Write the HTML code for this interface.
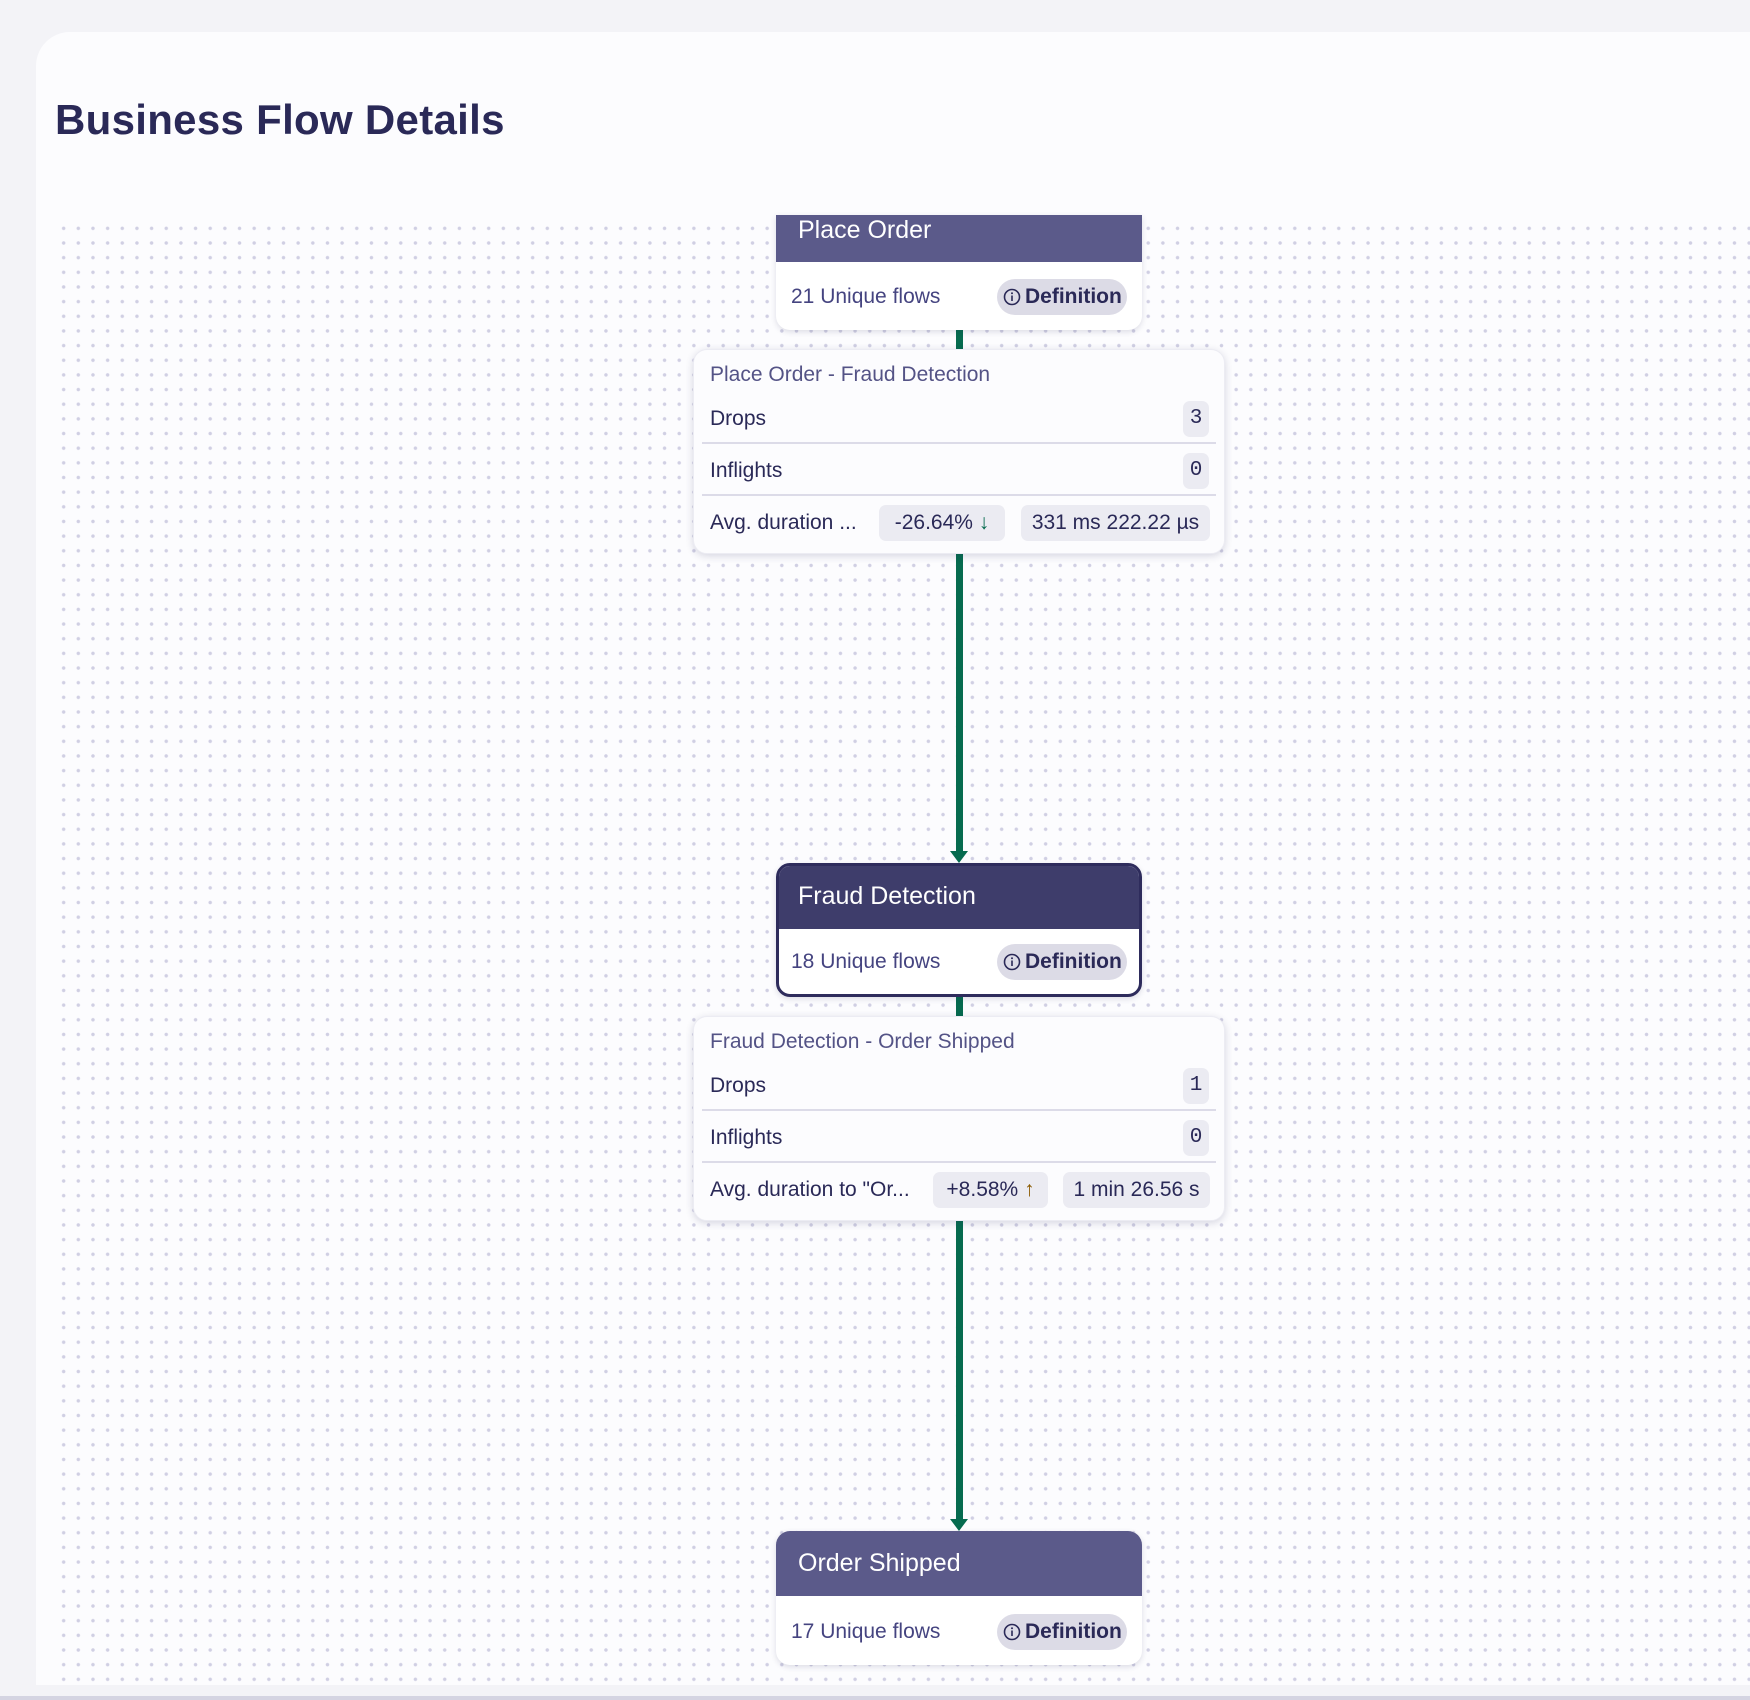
<!DOCTYPE html>
<html><head><style>
*{box-sizing:border-box;margin:0;padding:0}
body{width:1750px;height:1700px;background:#f3f3f7;position:relative;overflow:hidden;font-family:"Liberation Sans",sans-serif;color:#2a2957}
.bottom{position:absolute;left:0;top:1696px;width:1750px;height:4px;background:#d4d4e2}
.panel{position:absolute;left:36px;top:32px;width:1760px;height:1653px;background:#fcfcfe;border-radius:34px 0 0 0}
.dots{position:absolute;left:55px;top:220px;width:1695px;height:1465px;
background-image:radial-gradient(circle,#d0cfe3 1.5px,transparent 2px);background-size:14.667px 14.667px;background-position:-57.3px -28.3px}
h1{position:absolute;left:55px;top:96px;font-size:42px;font-weight:bold;color:#2a2957;letter-spacing:0.3px}
.line{position:absolute;left:956px;width:7px;background:#066b4f}
.arrow{position:absolute;left:950px;width:0;height:0;border-left:9.5px solid transparent;border-right:9.5px solid transparent;border-top:12px solid #066b4f}
.node{position:absolute;left:776px;width:366px;background:#fff;border-radius:14px;box-shadow:0 2px 6px rgba(40,40,90,.15);overflow:hidden}
.node .hd{background:#5b5a8a;color:#fff;font-size:25px;padding-left:22px}
.node .bd{position:relative}
.flows{position:absolute;left:15px;height:36px;line-height:36px;font-size:21px;color:#454480}
.def{position:absolute;left:221px;width:130px;height:36px;border-radius:18px;background:#dcdbe6;font-size:21px;font-weight:bold;color:#2a2957;padding-left:28px;line-height:36px}
.def svg{position:absolute;left:6px;top:9px}
.card{position:absolute;left:693px;width:532px;height:205px;background:#fcfcfe;border-radius:14px;box-shadow:0 2px 8px rgba(40,40,90,.18);border:1px solid #ececf3}
.card .t{position:absolute;left:16px;top:13px;font-size:21px;color:#545386}
.row{position:absolute;left:8px;right:8px;height:36px;line-height:36px}
.row .l{position:absolute;left:8px;top:0;font-size:21px;color:#2a2957}
.badge{position:absolute;top:0;height:36px;line-height:36px;background:#ebebf2;border-radius:7px;font-size:21px;color:#2a2957;text-align:center}
.sep{position:absolute;left:8px;right:8px;height:2px;background:#dcdbe8}
.mono{font-family:"Liberation Mono",monospace}
</style></head><body>
<div class="panel"></div>
<div class="dots"></div>
<div class="bottom"></div>
<h1>Business Flow Details</h1>

<div class="line" style="top:328px;height:24px"></div>
<div class="line" style="top:552px;height:300px"></div>
<div class="arrow" style="top:851px"></div>
<div class="line" style="top:995px;height:24px"></div>
<div class="line" style="top:1219px;height:301px"></div>
<div class="arrow" style="top:1519px"></div>

<!-- Place Order -->
<div class="node" style="top:215px;height:115px;border-radius:0 0 14px 14px">
<div class="hd" style="height:47px;line-height:30px">Place Order</div>
<div class="bd"><div class="flows" style="top:17px">21 Unique flows</div>
<div class="def" style="top:17px"><svg width="18" height="18" viewBox="0 0 18 18"><circle cx="9" cy="9" r="7.5" fill="none" stroke="#2a2957" stroke-width="1.6"/><rect x="8.2" y="7.5" width="1.6" height="5.5" fill="#2a2957"/><circle cx="9" cy="5.3" r="1" fill="#2a2957"/></svg>Definition</div></div>
</div>

<div class="card" style="top:349px">
<div class="t">Place Order - Fraud Detection</div>
<div class="row" style="top:51px"><div class="l">Drops</div><div class="badge mono" style="right:7px;width:26px">3</div></div>
<div class="sep" style="top:92px"></div>
<div class="row" style="top:103px"><div class="l">Inflights</div><div class="badge mono" style="right:7px;width:26px">0</div></div>
<div class="sep" style="top:144px"></div>
<div class="row" style="top:155px"><div class="l">Avg. duration ...</div>
<div class="badge" style="left:177px;width:126px">-26.64% <span style="color:#066b4f">↓</span></div>
<div class="badge" style="left:319px;width:189px">331 ms 222.22 µs</div></div>
</div>

<!-- Fraud Detection -->
<div class="node" style="top:863px;height:134px;border:3px solid #2e2c5c">
<div class="hd" style="height:63px;line-height:60px;background:#3e3d6b;padding-left:19px">Fraud Detection</div>
<div class="bd"><div class="flows" style="top:15px;left:12px">18 Unique flows</div>
<div class="def" style="top:15px;left:218px"><svg width="18" height="18" viewBox="0 0 18 18"><circle cx="9" cy="9" r="7.5" fill="none" stroke="#2a2957" stroke-width="1.6"/><rect x="8.2" y="7.5" width="1.6" height="5.5" fill="#2a2957"/><circle cx="9" cy="5.3" r="1" fill="#2a2957"/></svg>Definition</div></div>
</div>

<div class="card" style="top:1016px">
<div class="t">Fraud Detection - Order Shipped</div>
<div class="row" style="top:51px"><div class="l">Drops</div><div class="badge mono" style="right:7px;width:26px">1</div></div>
<div class="sep" style="top:92px"></div>
<div class="row" style="top:103px"><div class="l">Inflights</div><div class="badge mono" style="right:7px;width:26px">0</div></div>
<div class="sep" style="top:144px"></div>
<div class="row" style="top:155px"><div class="l">Avg. duration to "Or...</div>
<div class="badge" style="left:231px;width:115px">+8.58% <span style="color:#8a5a00">↑</span></div>
<div class="badge" style="left:361px;width:147px">1 min 26.56 s</div></div>
</div>

<!-- Order Shipped -->
<div class="node" style="top:1531px;height:134px">
<div class="hd" style="height:65px;line-height:64px">Order Shipped</div>
<div class="bd"><div class="flows" style="top:18px">17 Unique flows</div>
<div class="def" style="top:18px"><svg width="18" height="18" viewBox="0 0 18 18"><circle cx="9" cy="9" r="7.5" fill="none" stroke="#2a2957" stroke-width="1.6"/><rect x="8.2" y="7.5" width="1.6" height="5.5" fill="#2a2957"/><circle cx="9" cy="5.3" r="1" fill="#2a2957"/></svg>Definition</div></div>
</div>
</body></html>
